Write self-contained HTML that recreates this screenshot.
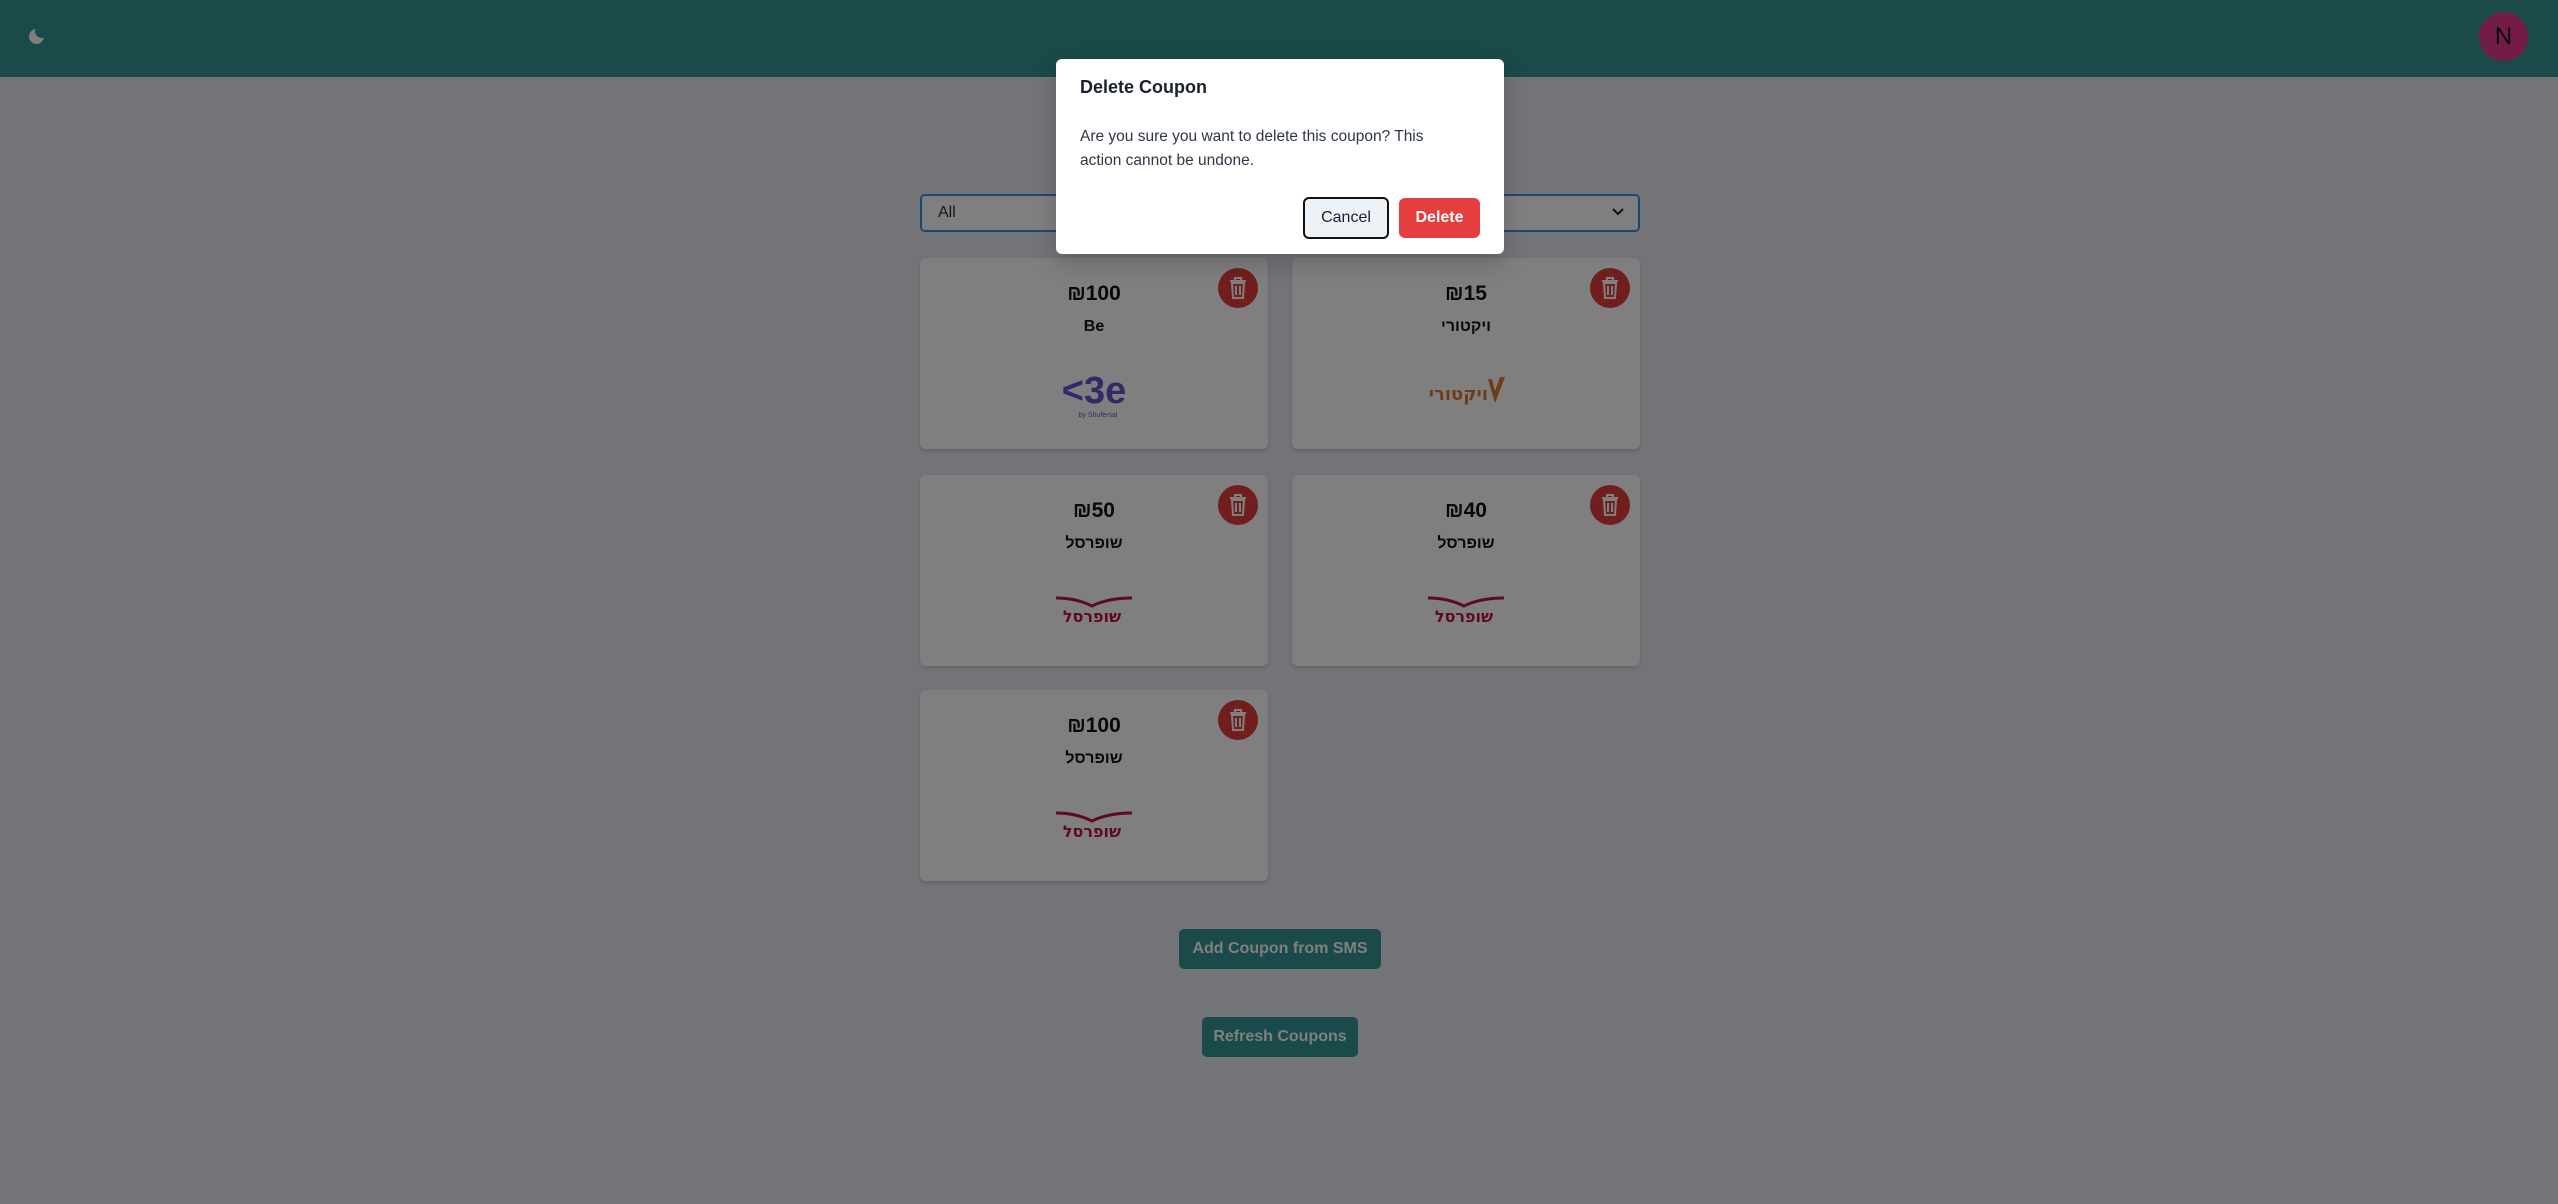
<!DOCTYPE html>
<html><head><meta charset="utf-8"><style>
*{box-sizing:border-box;margin:0;padding:0}
body{width:2558px;height:1204px;overflow:hidden;background:#e4e9f0;font-family:"Liberation Sans","Noto Sans CJK SC",sans-serif;position:relative}
.hdr{position:absolute;left:0;top:0;width:2558px;height:77px;background:#359594}
.moon{position:absolute;left:29px;top:29px;width:15px;height:15px;border-radius:50%;background:#fff;overflow:hidden}
.moon:after{content:"";position:absolute;left:6px;top:-5px;width:14px;height:14px;border-radius:50%;background:#359594}
.av{position:absolute;left:2479px;top:12px;width:49px;height:49px;border-radius:50%;background:#e73b8c;color:#111;font-size:24px;text-align:center;line-height:49px}
.sel{position:absolute;left:920px;top:194px;width:720px;height:38px;border:2px solid #3b8ee6;border-radius:5px;background:#fff;font-size:16px;color:#333;padding-left:16px;line-height:34px}
.sel svg{position:absolute;right:14px;top:12px}
.card{position:absolute;width:348px;height:191px;background:#fff;border-radius:6px;box-shadow:0 2px 4px rgba(0,0,0,.15);text-align:center}
.amt{position:absolute;top:24px;left:0;right:0;font-size:21px;font-weight:bold;color:#111}
.nm{position:absolute;top:60px;left:0;right:0;font-size:16px;font-weight:bold;color:#111;font-family:"Liberation Sans","DejaVu Sans",sans-serif}
.tr{position:absolute;right:10px;top:10px;width:40px;height:40px;border-radius:50%;background:#e33d3d}
.tr svg{position:absolute;left:11px;top:9px}
.logo{position:absolute;left:0;right:0;top:105px;height:60px}
.btn{position:absolute;background:#359594;color:#fff;font-size:16px;font-weight:bold;text-align:center;border-radius:5px}
.ov{position:absolute;left:0;top:0;width:2558px;height:1204px;background:rgba(0,0,0,.5)}
.modal{position:absolute;left:1056px;top:59px;width:448px;height:195px;background:#fff;border-radius:6px;box-shadow:0 8px 24px rgba(0,0,0,.2)}
.mt{position:absolute;left:24px;top:18px;font-size:18px;font-weight:bold;color:#1a202c}
.mb{position:absolute;left:24px;top:66px;width:370px;font-size:15.5px;line-height:24px;color:#2d3748}
.cb{position:absolute;left:247px;top:138px;width:86px;height:42px;border:2px solid #111;border-radius:6px;background:#edf2f7;font-size:16px;color:#1a202c;text-align:center;line-height:38px}
.db{position:absolute;left:343px;top:139px;width:81px;height:40px;border-radius:6px;background:#e53e3e;font-size:16px;color:#fff;font-weight:bold;text-align:center;line-height:40px}
</style></head><body>
<div class="hdr"><div class="moon"></div><div class="av">N</div></div>
<div class="sel">All<svg width="12" height="8" viewBox="0 0 12 8"><path d="M1 1l5 5 5-5" stroke="#222" stroke-width="2" fill="none"/></svg></div>

<div class="card" style="left:920px;top:258px"><div class="amt">₪100</div><div class="nm">Be</div><div class="tr"><svg width="18" height="22" viewBox="0 0 18 22"><path d="M1 4h16M6 4V1h6v3M3 6h12l-1 15H4z M7 9v9M11 9v9" stroke="#fff" stroke-width="2" fill="none"/></svg></div>
<svg class="logo" viewBox="0 0 348 60"><text x="174" y="40" text-anchor="middle" font-size="38" font-weight="bold" fill="#6a4fd0" font-family="Liberation Sans">&lt;3e</text><text x="178" y="54" text-anchor="middle" font-size="7" fill="#6a4fd0">by Shufersal</text></svg></div>

<div class="card" style="left:1292px;top:258px"><div class="amt">₪15</div><div class="nm">ויקטורי</div><div class="tr"><svg width="18" height="22" viewBox="0 0 18 22"><path d="M1 4h16M6 4V1h6v3M3 6h12l-1 15H4z M7 9v9M11 9v9" stroke="#fff" stroke-width="2" fill="none"/></svg></div>
<svg class="logo" viewBox="0 0 348 60"><path d="M196 16l7 24 10-26h-5l-5 14-3-12z" fill="#e0782a"/><text x="196" y="37" text-anchor="end" font-size="18" font-weight="bold" fill="#e0782a" font-family="DejaVu Sans">ויקטורי</text></svg></div>

<div class="card" style="left:920px;top:475px"><div class="amt">₪50</div><div class="nm">שופרסל</div><div class="tr"><svg width="18" height="22" viewBox="0 0 18 22"><path d="M1 4h16M6 4V1h6v3M3 6h12l-1 15H4z M7 9v9M11 9v9" stroke="#fff" stroke-width="2" fill="none"/></svg></div>
<svg class="logo" viewBox="0 0 348 60"><path d="M136 18q20 0 36 8q16-8 40-8" stroke="#c0143c" stroke-width="3" fill="none"/><text x="172" y="42" text-anchor="middle" font-size="16" font-weight="bold" fill="#c0143c" font-family="DejaVu Sans">שופרסל</text></svg></div>

<div class="card" style="left:1292px;top:475px"><div class="amt">₪40</div><div class="nm">שופרסל</div><div class="tr"><svg width="18" height="22" viewBox="0 0 18 22"><path d="M1 4h16M6 4V1h6v3M3 6h12l-1 15H4z M7 9v9M11 9v9" stroke="#fff" stroke-width="2" fill="none"/></svg></div>
<svg class="logo" viewBox="0 0 348 60"><path d="M136 18q20 0 36 8q16-8 40-8" stroke="#c0143c" stroke-width="3" fill="none"/><text x="172" y="42" text-anchor="middle" font-size="16" font-weight="bold" fill="#c0143c" font-family="DejaVu Sans">שופרסל</text></svg></div>

<div class="card" style="left:920px;top:690px"><div class="amt">₪100</div><div class="nm">שופרסל</div><div class="tr"><svg width="18" height="22" viewBox="0 0 18 22"><path d="M1 4h16M6 4V1h6v3M3 6h12l-1 15H4z M7 9v9M11 9v9" stroke="#fff" stroke-width="2" fill="none"/></svg></div>
<svg class="logo" viewBox="0 0 348 60"><path d="M136 18q20 0 36 8q16-8 40-8" stroke="#c0143c" stroke-width="3" fill="none"/><text x="172" y="42" text-anchor="middle" font-size="16" font-weight="bold" fill="#c0143c" font-family="DejaVu Sans">שופרסל</text></svg></div>

<div class="btn" style="left:1179px;top:929px;width:202px;height:40px;line-height:40px">Add Coupon from SMS</div>
<div class="btn" style="left:1202px;top:1017px;width:156px;height:40px;line-height:40px">Refresh Coupons</div>

<div class="ov"></div>
<div class="modal"><div class="mt">Delete Coupon</div><div class="mb">Are you sure you want to delete this coupon? This action cannot be undone.</div><div class="cb">Cancel</div><div class="db">Delete</div></div>
</body></html>
